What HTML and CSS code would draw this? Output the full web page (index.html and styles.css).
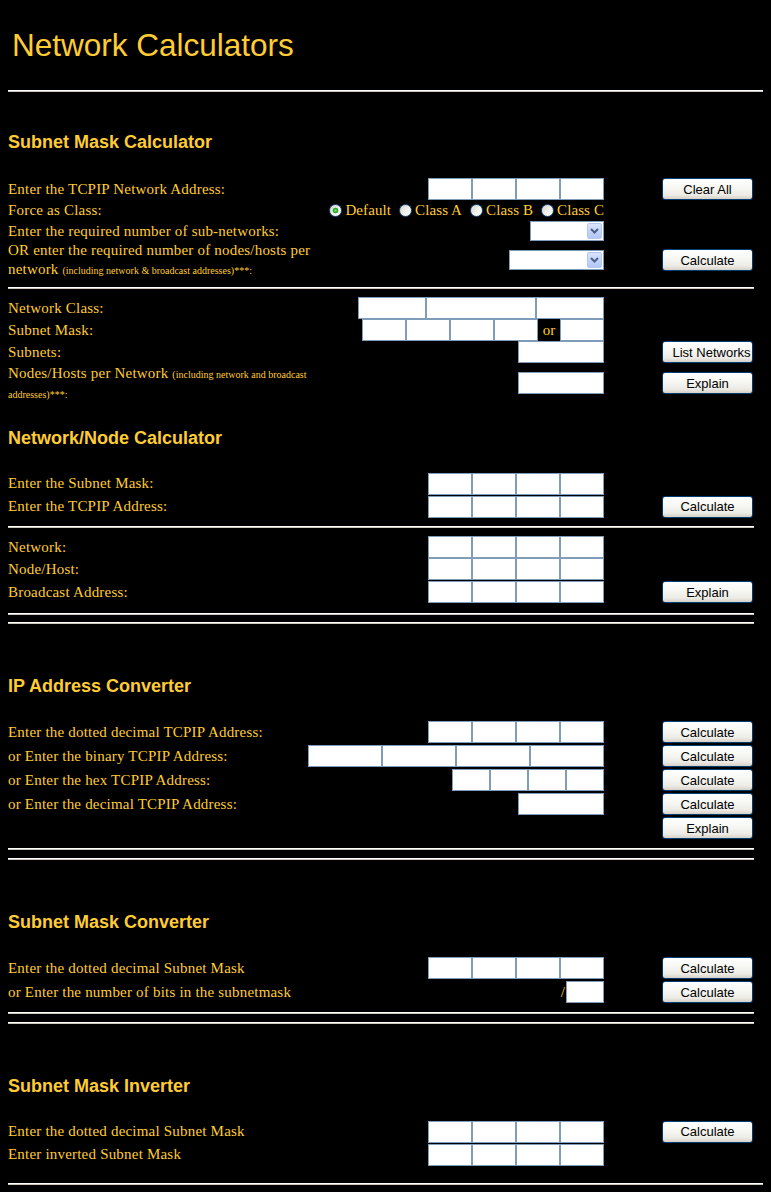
FILE: index.html
```html
<!DOCTYPE html>
<html lang="en">
<head>
<meta charset="utf-8">
<title>Network Calculators</title>
<link rel="stylesheet" href="styles.css">
</head>
<body>
<h1 class="title">Network Calculators</h1>
<hr class="rule full first">

<h2 class="head h-first">Subnet Mask Calculator</h2>
<div class="table mt26">
  <div class="row r22">
    <div class="label">Enter the TCPIP Network Address:</div>
    <div class="fields"><input class="box w44"><input class="box w44"><input class="box w44"><input class="box w44"></div>
    <div class="action"><button class="btn">Clear All</button></div>
  </div>
  <div class="row r21">
    <div class="label">Force as Class:</div>
    <div class="fields radios">
      <input type="radio" class="radio" name="cls" checked><span>Default</span>
      <input type="radio" class="radio" name="cls"><span>Class A</span>
      <input type="radio" class="radio" name="cls"><span>Class B</span>
      <input type="radio" class="radio" name="cls"><span>Class C</span>
    </div>
  </div>
  <div class="row r20">
    <div class="label">Enter the required number of sub-networks:</div>
    <div class="fields"><div class="select w74"><span class="arrow"><svg width="9" height="6" viewBox="0 0 9 6"><path d="M1 1 L4.5 4.5 L8 1" fill="none" stroke="#4d6185" stroke-width="2"/></svg></span></div></div>
  </div>
  <div class="row r38">
    <div class="label two l19">OR enter the required number of nodes/hosts per<br>network <span class="small">(including network &amp; broadcast addresses)***:</span></div>
    <div class="fields"><div class="select w95"><span class="arrow"><svg width="9" height="6" viewBox="0 0 9 6"><path d="M1 1 L4.5 4.5 L8 1" fill="none" stroke="#4d6185" stroke-width="2"/></svg></span></div></div>
    <div class="action"><button class="btn">Calculate</button></div>
  </div>
</div>
<hr class="rule mt8">
<div class="table mt8">
  <div class="row r22">
    <div class="label">Network Class:</div>
    <div class="fields"><input class="box w68"><input class="box w110"><input class="box w68"></div>
  </div>
  <div class="row r22">
    <div class="label">Subnet Mask:</div>
    <div class="fields"><input class="box w44"><input class="box w44"><input class="box w44"><input class="box w44"><span class="or">or</span><input class="box w44"></div>
  </div>
  <div class="row r22">
    <div class="label">Subnets:</div>
    <div class="fields"><input class="box w86"></div>
    <div class="action"><button class="btn wide">List Networks</button></div>
  </div>
  <div class="row r40">
    <div class="label two l20">Nodes/Hosts per Network <span class="small">(including network and broadcast</span><br><span class="small">addresses)***:</span></div>
    <div class="fields"><input class="box w86"></div>
    <div class="action"><button class="btn">Explain</button></div>
  </div>
</div>

<h2 class="head mt24">Network/Node Calculator</h2>
<div class="table mt24">
  <div class="row r23">
    <div class="label">Enter the Subnet Mask:</div>
    <div class="fields"><input class="box w44"><input class="box w44"><input class="box w44"><input class="box w44"></div>
  </div>
  <div class="row r23">
    <div class="label">Enter the TCPIP Address:</div>
    <div class="fields"><input class="box w44"><input class="box w44"><input class="box w44"><input class="box w44"></div>
    <div class="action"><button class="btn">Calculate</button></div>
  </div>
</div>
<hr class="rule mt8">
<div class="table mt8">
  <div class="row r22">
    <div class="label">Network:</div>
    <div class="fields"><input class="box w44"><input class="box w44"><input class="box w44"><input class="box w44"></div>
  </div>
  <div class="row r22">
    <div class="label">Node/Host:</div>
    <div class="fields"><input class="box w44"><input class="box w44"><input class="box w44"><input class="box w44"></div>
  </div>
  <div class="row r24">
    <div class="label">Broadcast Address:</div>
    <div class="fields"><input class="box w44"><input class="box w44"><input class="box w44"><input class="box w44"></div>
    <div class="action"><button class="btn">Explain</button></div>
  </div>
</div>
<hr class="rule mt9">
<hr class="rule mt7">

<h2 class="head mt51">IP Address Converter</h2>
<div class="table mt24">
  <div class="row r24">
    <div class="label">Enter the dotted decimal TCPIP Address:</div>
    <div class="fields"><input class="box w44"><input class="box w44"><input class="box w44"><input class="box w44"></div>
    <div class="action"><button class="btn">Calculate</button></div>
  </div>
  <div class="row r24">
    <div class="label">or Enter the binary TCPIP Address:</div>
    <div class="fields"><input class="box w74"><input class="box w74"><input class="box w74"><input class="box w74"></div>
    <div class="action"><button class="btn">Calculate</button></div>
  </div>
  <div class="row r24">
    <div class="label">or Enter the hex TCPIP Address:</div>
    <div class="fields"><input class="box w38"><input class="box w38"><input class="box w38"><input class="box w38"></div>
    <div class="action"><button class="btn">Calculate</button></div>
  </div>
  <div class="row r24">
    <div class="label">or Enter the decimal TCPIP Address:</div>
    <div class="fields"><input class="box w86"></div>
    <div class="action"><button class="btn">Calculate</button></div>
  </div>
  <div class="row r24">
    <div class="label"></div>
    <div class="fields"></div>
    <div class="action"><button class="btn">Explain</button></div>
  </div>
</div>
<hr class="rule mt8">
<hr class="rule mt8">

<h2 class="head mt51">Subnet Mask Converter</h2>
<div class="table mt24">
  <div class="row r24">
    <div class="label">Enter the dotted decimal Subnet Mask</div>
    <div class="fields"><input class="box w44"><input class="box w44"><input class="box w44"><input class="box w44"></div>
    <div class="action"><button class="btn">Calculate</button></div>
  </div>
  <div class="row r24">
    <div class="label">or Enter the number of bits in the subnetmask</div>
    <div class="fields"><span class="slash">/</span><input class="box w38"></div>
    <div class="action"><button class="btn">Calculate</button></div>
  </div>
</div>
<hr class="rule mt8">
<hr class="rule mt8">

<h2 class="head mt51">Subnet Mask Inverter</h2>
<div class="table mt24">
  <div class="row r23">
    <div class="label">Enter the dotted decimal Subnet Mask</div>
    <div class="fields"><input class="box w44"><input class="box w44"><input class="box w44"><input class="box w44"></div>
    <div class="action"><button class="btn">Calculate</button></div>
  </div>
  <div class="row r23">
    <div class="label">Enter inverted Subnet Mask</div>
    <div class="fields"><input class="box w44"><input class="box w44"><input class="box w44"><input class="box w44"></div>
  </div>
</div>
<hr class="rule full mt17">
</body>
</html>
```

FILE: styles.css
```css
html { background: #000; }
body {
  margin: 0;
  padding: 8px;
  background: #000;
  color: #ffcc33;
  font-family: "Liberation Serif", "Times New Roman", serif;
  font-size: 15px;
}

.title {
  font-family: "Liberation Sans", Arial, sans-serif;
  font-weight: normal;
  font-size: 31.5px;
  line-height: 36px;
  margin: 19px 0 0 4px;
  color: #ffcc33;
}

.rule {
  display: block;
  height: 0;
  width: 746px;
  margin: 0;
  border: 0;
  border-top: 1px solid #ffffff;
  border-bottom: 1px solid #c9c5b9;
}
.rule.full { width: auto; }
.rule.first { margin-top: 27px; }

.head {
  font-family: "Liberation Sans", Arial, sans-serif;
  font-weight: bold;
  font-size: 18px;
  line-height: 19px;
  height: 19px;
  padding-top: 2px;
  margin: 0;
  color: #ffcc33;
}
.h-first { margin-top: 39px; }

.mt7 { margin-top: 7px; }
.mt8 { margin-top: 8px; }
.mt9 { margin-top: 9px; }
.mt17 { margin-top: 17px; }
.mt24 { margin-top: 24px; }
.mt26 { margin-top: 26px; }
.mt51 { margin-top: 51px; }

.table {
  width: 746px;
  display: flex;
  flex-direction: column;
}
.row {
  display: flex;
  align-items: center;
  overflow: visible;
}
.r20 { height: 20px; }
.r21 { height: 21px; }
.r22 { height: 22px; }
.r23 { height: 23px; }
.r24 { height: 24px; }
.r38 { height: 38px; }
.r40 { height: 40px; }

.label {
  width: 300px;
  flex: none;
  letter-spacing: 0.2px;
  line-height: 19px;
  white-space: nowrap;
}
.label.l19 { line-height: 19px; }
.label.l20 { line-height: 20px; }
.small {
  font-size: 10px;
  line-height: 1;
  letter-spacing: 0;
}

.fields {
  width: 296px;
  flex: none;
  display: flex;
  justify-content: flex-end;
  align-items: center;
}
.action {
  margin-left: 58px;
  width: 91px;
  flex: none;
  display: flex;
}

.box {
  display: block;
  box-sizing: border-box;
  height: 22px;
  margin: 0;
  padding: 0;
  border: 1px solid #7f9db9;
  background: #fff;
  outline: none;
}
.w38 { width: 38px; }
.w44 { width: 44px; }
.w68 { width: 68px; }
.w74 { width: 74px; }
.w86 { width: 86px; }
.w110 { width: 110px; }

.or {
  width: 22px;
  text-align: center;
  line-height: 22px;
}
.slash {
  margin-right: 1px;
}

.radios {
  letter-spacing: 0.1px;
  white-space: nowrap;
}
.radio {
  appearance: none;
  -webkit-appearance: none;
  box-sizing: border-box;
  width: 13px;
  height: 13px;
  margin: 0 3px 0 8px;
  border-radius: 50%;
  border: 1px solid #1c5180;
  background: linear-gradient(135deg, #d4d2cb 0%, #f2f1ec 55%, #ffffff 100%);
  flex: none;
}
.radio:first-child { margin-left: 0; }
.radio:checked {
  background:
    radial-gradient(circle at 50% 50%, #7fe37f 0, #3cb93c 1.5px, #21a121 2.5px, rgba(33,161,33,0) 3.2px),
    linear-gradient(135deg, #d4d2cb 0%, #f2f1ec 55%, #ffffff 100%);
}

.select {
  box-sizing: border-box;
  height: 20px;
  border: 1px solid #7f9db9;
  background: #fff;
  padding: 1px;
  display: flex;
  justify-content: flex-end;
}
.w95 { width: 95px; }
.arrow {
  box-sizing: border-box;
  width: 15px;
  height: 16px;
  border: 1px solid #b5c7ef;
  border-radius: 2px;
  background: linear-gradient(to bottom, #d9e4fd 0%, #c3d4fa 50%, #b3c7f6 100%);
  display: flex;
  align-items: center;
  justify-content: center;
}
.arrow svg { display: block; }

.btn {
  box-sizing: border-box;
  width: 91px;
  height: 22px;
  margin: 0;
  padding: 0;
  border: 1px solid #003c74;
  border-radius: 3px;
  background: linear-gradient(to bottom, #ffffff 0%, #f6f6f2 45%, #ecebe6 80%, #d6d0c5 100%);
  font-family: "Liberation Sans", Arial, sans-serif;
  font-size: 13px;
  color: #000;
  text-align: center;
  white-space: nowrap;
}
.btn.wide { padding-left: 8px; }
```
